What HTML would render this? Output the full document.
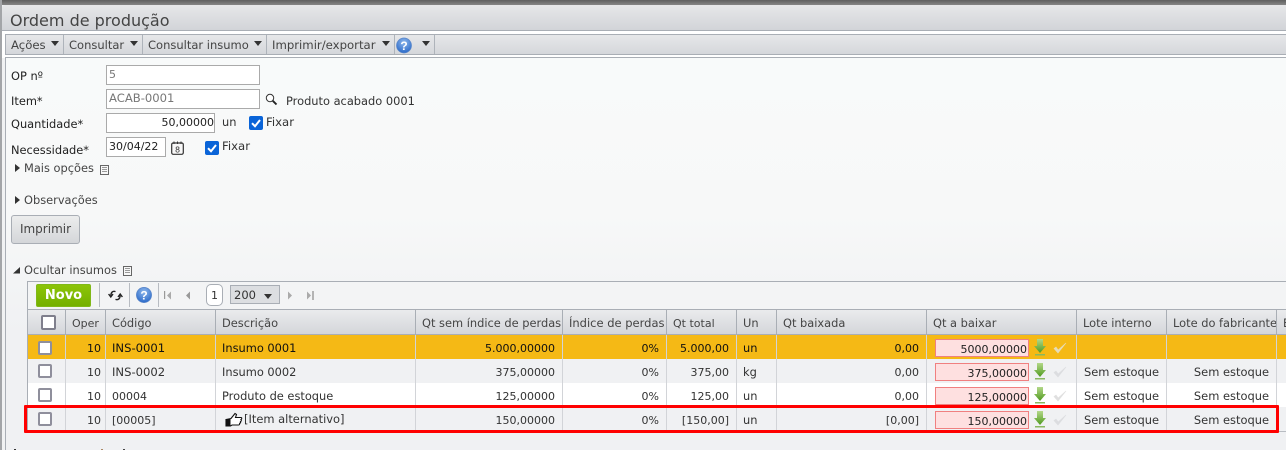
<!DOCTYPE html>
<html lang="pt"><head><meta charset="utf-8"><title>Ordem de produção</title>
<style>
html,body{margin:0;padding:0}
body{width:1286px;height:450px;overflow:hidden;position:relative;background:#f0f1f3;font:11.4px/14px "DejaVu Sans",sans-serif;color:#333}
.a{position:absolute;white-space:nowrap}
.box{position:absolute;box-sizing:border-box}
.lb{color:#222}
.inp{position:absolute;box-sizing:border-box;background:#fff;border:1px solid #aaa;height:20px;line-height:18px;padding:0 2px;font-size:11px;white-space:nowrap}
.ck{position:absolute;width:14px;height:14px;border-radius:2px;background:#0a64d8}
.ck svg{position:absolute;left:0;top:0}
.tri{position:absolute;width:0;height:0;border-left:4px solid transparent;border-right:4px solid transparent;border-top:5px solid #333}
.trr{position:absolute;width:0;height:0;border-top:4px solid transparent;border-bottom:4px solid transparent;border-left:5px solid #333}
.tb{position:absolute;top:36px;height:19px;line-height:19px;color:#444;white-space:nowrap;font-size:11.7px}
.sep{position:absolute;top:35px;width:1px;height:19px;background:#aeb3ba}
.vl{position:absolute;width:1px}
.hd{position:absolute;top:316px;color:#444;white-space:nowrap;line-height:14px}
.row{position:absolute;left:27px;width:1259px;height:24px}
.c{position:absolute;height:24px;line-height:27px;white-space:nowrap;color:#333}
.r{text-align:right;font-size:11px}
.n{font-size:11px}
.s{text-align:right;font-size:11.45px}
.cb{position:absolute;left:38px;width:14px;height:14px;box-sizing:border-box;background:#fff;border:2px solid #8f8f9c;border-radius:2px}
.q{position:absolute;left:935px;width:94px;height:18px;box-sizing:border-box;background:#fee0e0;border:1px solid #f08080;text-align:right;line-height:19px;padding-right:1px;color:#222;white-space:nowrap;font-size:11px}
</style></head><body>
<!-- top strip -->
<div class="box" style="left:0;top:0;width:1286px;height:5px;background:linear-gradient(#5f5f5f,#858585)"></div>
<div class="box" style="left:0;top:0;width:2px;height:450px;background:#a3a5a8"></div>
<div class="box" style="left:2px;top:5px;width:1284px;height:26px;background:linear-gradient(#e6e7e9,#d2d4d8);border-bottom:1px solid #a9aeb5;border-top-left-radius:3px"></div>
<div class="box" style="left:2px;top:31px;width:1284px;height:27px;background:#fff"></div>
<div class="box" style="left:5px;top:34px;width:1281px;height:21px;background:linear-gradient(#e6e7e9,#d5d7db);border-top:1px solid #a9aeb5;border-bottom:1px solid #a9aeb5;border-left:1px solid #a9aeb5"></div>
<div class="box" style="left:5px;top:57px;width:1281px;height:393px;background:linear-gradient(#f8fafa,#f7f8f8 40%,#f0f1f3 70%);border-top:1px solid #a9aeb5;border-left:1px solid #a9aeb5"></div>
<div class="box" style="left:2px;top:58px;width:3px;height:392px;background:#f1f2f3"></div>

<div class="a" style="left:10px;top:11px;font-size:16px;line-height:20px;color:#444">Ordem de produção</div>

<!-- toolbar -->
<div class="tb" style="left:11px">Ações</div><div class="tri" style="left:51px;top:41px"></div><div class="sep" style="left:63px"></div>
<div class="tb" style="left:69px;font-size:11.5px">Consultar</div><div class="tri" style="left:130px;top:41px"></div><div class="sep" style="left:142px"></div>
<div class="tb" style="left:148px;font-size:11.5px">Consultar insumo</div><div class="tri" style="left:254px;top:41px"></div><div class="sep" style="left:266px"></div>
<div class="tb" style="left:272px">Imprimir/exportar</div><div class="tri" style="left:382px;top:41px"></div><div class="sep" style="left:394px"></div>
<svg class="box" style="left:396px;top:37px" width="16" height="17" viewBox="0 0 16 17"><defs><radialGradient id="hb" cx=".5" cy=".3" r=".8"><stop offset="0" stop-color="#8fb8ec"/><stop offset="1" stop-color="#1d5fc4"/></radialGradient></defs><circle cx="8" cy="8.5" r="7.5" fill="url(#hb)" stroke="#5a86c8" stroke-width=".7"/><text x="8" y="13" text-anchor="middle" font-family="Liberation Sans" font-weight="bold" font-size="12" fill="#fff">?</text></svg>
<div class="tri" style="left:422px;top:41px"></div><div class="sep" style="left:434px"></div>

<!-- form -->
<div class="a lb" style="left:11px;top:69px">OP nº</div>
<div class="inp" style="left:106px;top:65px;width:154px;color:#777">5</div>
<div class="a lb" style="left:11px;top:94px">Item*</div>
<div class="inp" style="left:106px;top:89px;width:154px;color:#777;font-size:11.6px;line-height:16px">ACAB-0001</div>
<svg class="box" style="left:265px;top:93px" width="13" height="13" viewBox="0 0 13 13"><circle cx="5" cy="5" r="3.7" fill="#fff" stroke="#333" stroke-width="1"/><path d="M7.8 7.8L11.5 11.5" stroke="#222" stroke-width="1.9"/></svg>
<div class="a" style="left:286px;top:94px;color:#333">Produto acabado 0001</div>
<div class="a lb" style="left:11px;top:117px">Quantidade*</div>
<div class="inp" style="left:106px;top:113px;width:109px;text-align:right;padding-right:0;color:#222">50,00000</div>
<div class="a" style="left:222px;top:115px">un</div>
<div class="ck" style="left:249px;top:116px"><svg width="14" height="14"><path d="M3 7.2L6 10.2L11 4" fill="none" stroke="#fff" stroke-width="2"/></svg></div>
<div class="a" style="left:266px;top:115px;font-size:11.7px">Fixar</div>
<div class="a lb" style="left:11px;top:143px">Necessidade*</div>
<div class="inp" style="left:106px;top:137px;width:60px;color:#222">30/04/22</div>
<svg class="box" style="left:171px;top:141px" width="13" height="14" viewBox="0 0 13 14"><rect x=".7" y="2" width="11.6" height="11.3" rx="1.5" fill="#f8f8f8" stroke="#333" stroke-width="1.2"/><path d="M3 .5v2.5M6.5 .5v2.5M10 .5v2.5" stroke="#333"/><text x="6.5" y="11.5" text-anchor="middle" font-size="8" fill="#333" font-family="DejaVu Sans">8</text></svg>
<div class="ck" style="left:205px;top:141px"><svg width="14" height="14"><path d="M3 7.2L6 10.2L11 4" fill="none" stroke="#fff" stroke-width="2"/></svg></div>
<div class="a" style="left:222px;top:139px;font-size:11.7px">Fixar</div>

<div class="trr" style="left:15px;top:164px"></div>
<div class="a" style="left:24px;top:161px;color:#444">Mais opções</div>
<svg class="box" style="left:100px;top:165px" width="9" height="10"><rect x=".5" y=".5" width="8" height="9" fill="#f7f7f7" stroke="#666"/><path d="M2 2.5h5M2 4.5h5M2 6.5h5" stroke="#999"/></svg>
<div class="trr" style="left:15px;top:196px"></div>
<div class="a" style="left:24px;top:193px;color:#444">Observações</div>

<div class="box" style="left:11px;top:215px;width:69px;height:29px;border:1px solid #a9aeb5;border-radius:3px;background:linear-gradient(#eceded,#d4d6d9);text-align:center;line-height:27px;font-size:12px;color:#444">Imprimir</div>

<svg class="box" style="left:13px;top:267px" width="8" height="7"><path d="M0 6.5L7 6.5L7 0Z" fill="#333"/></svg>
<div class="a" style="left:24px;top:263px;color:#444">Ocultar insumos</div>
<svg class="box" style="left:123px;top:266px" width="9" height="10"><rect x=".5" y=".5" width="8" height="9" fill="#f7f7f7" stroke="#666"/><path d="M2 2.5h5M2 4.5h5M2 6.5h5" stroke="#999"/></svg>

<!-- grid toolbar -->
<div class="box" style="left:27px;top:281px;width:1259px;height:28px;background:#f3f4f5;border-top:1px solid #a9aeb5;border-left:1px solid #a9aeb5"></div>
<div class="box" style="left:36px;top:284px;width:55px;height:23px;border-radius:2px;background:linear-gradient(#8cc408,#74b000);border:1px solid #80b818;color:#fff;font:bold 13px/21px 'DejaVu Sans',sans-serif;text-align:center">Novo</div>
<div class="box" style="left:99px;top:283px;width:1px;height:24px;background:#b8bcc2"></div>
<svg class="box" style="left:108px;top:289px" width="15" height="13" viewBox="0 0 15 13"><path d="M7.5 2.6C4.6 1.6 3 3.5 2.8 6.5M0.6 5L2.8 8L5 5M7.5 10.4C10.4 11.4 12 9.5 12.2 6.5M10 8L12.2 5L14.4 8" fill="none" stroke="#222" stroke-width="1.4"/></svg>
<div class="box" style="left:129px;top:283px;width:1px;height:24px;background:#b8bcc2"></div>
<svg class="box" style="left:136px;top:287px" width="16" height="16" viewBox="0 0 16 16"><circle cx="8" cy="8" r="7.6" fill="url(#hb)" stroke="#5a86c8" stroke-width=".7"/><text x="8" y="12.5" text-anchor="middle" font-family="Liberation Sans" font-weight="bold" font-size="12" fill="#fff">?</text></svg>
<div class="box" style="left:158px;top:283px;width:1px;height:24px;background:#b8bcc2"></div>
<svg class="box" style="left:164px;top:291px" width="8" height="9"><path d="M.5 0v8" stroke="#999" stroke-width="1.4"/><path d="M7 0.5L3 4.5L7 8.5Z" fill="#aaa"/></svg>
<svg class="box" style="left:185px;top:291px" width="6" height="9"><path d="M5 0.5L1 4.5L5 8.5Z" fill="#999"/></svg>
<div class="box" style="left:206px;top:284px;width:17px;height:22px;background:#fff;border:1px solid #a9aeb5;border-radius:5px;text-align:center;line-height:21px;font-size:11px;color:#333">1</div>
<div class="box" style="left:230px;top:285px;width:50px;height:19px;background:#dcdee1;border:1px solid #a9aeb5;line-height:18px;padding-left:3px;font-size:11.5px;color:#333">200</div>
<div class="tri" style="left:264px;top:294px;border-left-width:4.5px;border-right-width:4.5px"></div>
<svg class="box" style="left:287px;top:291px" width="6" height="9"><path d="M1 0.5L5 4.5L1 8.5Z" fill="#aaa"/></svg>
<svg class="box" style="left:306px;top:291px" width="8" height="9"><path d="M1 0.5L5 4.5L1 8.5Z" fill="#aaa"/><path d="M7 0v9" stroke="#999" stroke-width="1.4"/></svg>

<!-- grid header -->
<div class="box" style="left:27px;top:309px;width:1259px;height:26px;background:linear-gradient(#eaebed,#d4d6da);border-top:1px solid #a9aeb5;border-left:1px solid #a9aeb5;border-bottom:1px solid #a9aeb5"></div>
<div class="box" style="left:41px;top:315px;width:15px;height:15px;background:#fff;border:2px solid #7f7f8c;border-radius:2px"></div>
<div class="hd" style="left:72px;top:317px;font-size:11px">Oper</div>
<div class="hd" style="left:112px">Código</div>
<div class="hd" style="left:222px">Descrição</div>
<div class="hd" style="left:422px">Qt sem índice de perdas</div>
<div class="hd" style="left:569px;width:96px;overflow:hidden;font-size:11.5px">Índice de perdas</div>
<div class="hd" style="left:673px;top:317px;font-size:11px">Qt total</div>
<div class="hd" style="left:743px">Un</div>
<div class="hd" style="left:783px">Qt baixada</div>
<div class="hd" style="left:933px">Qt a baixar</div>
<div class="hd" style="left:1083px;font-size:11.4px">Lote interno</div>
<div class="hd" style="left:1173px;width:103px;overflow:hidden">Lote do fabricante</div>
<div class="hd" style="left:1283px">E</div>

<!-- rows -->
<div class="row" style="top:335px;background:#f5b915"></div>
<div class="row" style="top:359px;background:#f0f1f3"></div>
<div class="row" style="top:383px;background:#fff"></div>
<div class="row" style="top:407px;background:#f0f1f3"></div>
<div class="box" style="left:27px;top:431px;width:1259px;height:1px;background:#b8bcc2"></div>

<!-- column lines -->
<div class="vl" style="left:27px;top:309px;height:122px;background:#a9aeb5"></div>
<div class="vl" style="left:65px;top:310px;height:25px;background:#a9aeb5"></div><div class="vl" style="left:105px;top:310px;height:25px;background:#a9aeb5"></div><div class="vl" style="left:215px;top:310px;height:25px;background:#a9aeb5"></div><div class="vl" style="left:415px;top:310px;height:25px;background:#a9aeb5"></div><div class="vl" style="left:562px;top:310px;height:25px;background:#a9aeb5"></div><div class="vl" style="left:666px;top:310px;height:25px;background:#a9aeb5"></div><div class="vl" style="left:736px;top:310px;height:25px;background:#a9aeb5"></div><div class="vl" style="left:776px;top:310px;height:25px;background:#a9aeb5"></div><div class="vl" style="left:926px;top:310px;height:25px;background:#a9aeb5"></div><div class="vl" style="left:1076px;top:310px;height:25px;background:#a9aeb5"></div><div class="vl" style="left:1166px;top:310px;height:25px;background:#a9aeb5"></div><div class="vl" style="left:1276px;top:310px;height:25px;background:#a9aeb5"></div>
<div class="vl" style="left:65px;top:335px;height:96px;background:#d2d4d8"></div><div class="vl" style="left:105px;top:335px;height:96px;background:#d2d4d8"></div><div class="vl" style="left:215px;top:335px;height:96px;background:#d2d4d8"></div><div class="vl" style="left:415px;top:335px;height:96px;background:#d2d4d8"></div><div class="vl" style="left:562px;top:335px;height:96px;background:#d2d4d8"></div><div class="vl" style="left:666px;top:335px;height:96px;background:#d2d4d8"></div><div class="vl" style="left:736px;top:335px;height:96px;background:#d2d4d8"></div><div class="vl" style="left:776px;top:335px;height:96px;background:#d2d4d8"></div><div class="vl" style="left:926px;top:335px;height:96px;background:#d2d4d8"></div><div class="vl" style="left:1076px;top:335px;height:96px;background:#d2d4d8"></div><div class="vl" style="left:1166px;top:335px;height:96px;background:#d2d4d8"></div><div class="vl" style="left:1276px;top:335px;height:96px;background:#d2d4d8"></div>

<!-- row 1 -->
<div class="cb" style="top:341px"></div>
<div class="c r" style="left:66px;width:35px;top:335px;color:#111">10</div>
<div class="c" style="left:112px;top:335px;color:#111;font-size:11.6px">INS-0001</div>
<div class="c" style="left:222px;top:335px;color:#111">Insumo 0001</div>
<div class="c r" style="left:416px;width:139px;top:335px;color:#111">5.000,00000</div>
<div class="c r" style="left:563px;width:96px;top:335px;color:#111">0%</div>
<div class="c r" style="left:667px;width:62px;top:335px;color:#111">5.000,00</div>
<div class="c" style="left:743px;top:335px;color:#111">un</div>
<div class="c r" style="left:777px;width:142px;top:335px;color:#111">0,00</div>
<div class="q" style="top:339px">5000,00000</div>

<!-- row 2 -->
<div class="cb" style="top:364px"></div>
<div class="c r" style="left:66px;width:35px;top:359px">10</div>
<div class="c" style="left:112px;top:359px;font-size:11.6px">INS-0002</div>
<div class="c" style="left:222px;top:359px">Insumo 0002</div>
<div class="c r" style="left:416px;width:139px;top:359px">375,00000</div>
<div class="c r" style="left:563px;width:96px;top:359px">0%</div>
<div class="c r" style="left:667px;width:62px;top:359px">375,00</div>
<div class="c" style="left:743px;top:359px">kg</div>
<div class="c r" style="left:777px;width:142px;top:359px">0,00</div>
<div class="q" style="top:363px">375,00000</div>
<div class="c" style="left:1084px;top:359px;font-size:11.45px">Sem estoque</div>
<div class="c s" style="left:1167px;width:102px;top:359px">Sem estoque</div>

<!-- row 3 -->
<div class="cb" style="top:388px"></div>
<div class="c r" style="left:66px;width:35px;top:383px">10</div>
<div class="c n" style="left:112px;top:383px">00004</div>
<div class="c" style="left:222px;top:383px">Produto de estoque</div>
<div class="c r" style="left:416px;width:139px;top:383px">125,00000</div>
<div class="c r" style="left:563px;width:96px;top:383px">0%</div>
<div class="c r" style="left:667px;width:62px;top:383px">125,00</div>
<div class="c" style="left:743px;top:383px">un</div>
<div class="c r" style="left:777px;width:142px;top:383px">0,00</div>
<div class="q" style="top:387px">125,00000</div>
<div class="c" style="left:1084px;top:383px;font-size:11.45px">Sem estoque</div>
<div class="c s" style="left:1167px;width:102px;top:383px">Sem estoque</div>

<!-- row 4 -->
<div class="cb" style="top:412px"></div>
<div class="c r" style="left:66px;width:35px;top:407px">10</div>
<div class="c n" style="left:112px;top:407px">[00005]</div>
<svg class="box" style="left:225px;top:412px" width="18" height="16" viewBox="0 0 18 16"><path d="M1 7.5L6 6.5L10 1.5L11.5 2.5L10.5 5.5L16 5.5C17 5.5 17 7 16 7.5C16.6 8 16.4 9.2 15.5 9.5C15.9 10.2 15.5 11.2 14.6 11.3C14.8 12.3 14.2 13 13.4 13L7 13L5.5 14L1 14Z" fill="#fff" stroke="#111" stroke-width="1.1"/><path d="M1 7.5L5.5 6.8L5.5 14L1 14Z" fill="#111"/></svg>
<div class="c" style="left:244px;top:406px;font-size:11.45px">[Item alternativo]</div>
<div class="c r" style="left:416px;width:139px;top:407px">150,00000</div>
<div class="c r" style="left:563px;width:96px;top:407px">0%</div>
<div class="c r" style="left:667px;width:62px;top:407px">[150,00]</div>
<div class="c" style="left:743px;top:407px">un</div>
<div class="c r" style="left:777px;width:142px;top:407px">[0,00]</div>
<div class="q" style="top:411px">150,00000</div>
<div class="c" style="left:1084px;top:407px;font-size:11.45px">Sem estoque</div>
<div class="c s" style="left:1167px;width:102px;top:407px">Sem estoque</div>

<!-- arrows and checks -->
<svg class="box" style="left:1033px;top:339px" width="14" height="17" viewBox="0 0 14 17"><defs><linearGradient id="g" x1="0" y1="0" x2="0" y2="1"><stop offset="0" stop-color="#b4d88a"/><stop offset="1" stop-color="#4f9a1e"/></linearGradient></defs><path d="M4 0H10V7H13L7 14L1 7H4Z" fill="url(#g)"/><rect x="2" y="15" width="10" height="1.5" fill="#8ab860"/></svg>
<svg class="box" style="left:1033px;top:363px" width="14" height="17" viewBox="0 0 14 17"><path d="M4 0H10V7H13L7 14L1 7H4Z" fill="url(#g)"/><rect x="2" y="15" width="10" height="1.5" fill="#8ab860"/></svg>
<svg class="box" style="left:1033px;top:387px" width="14" height="17" viewBox="0 0 14 17"><path d="M4 0H10V7H13L7 14L1 7H4Z" fill="url(#g)"/><rect x="2" y="15" width="10" height="1.5" fill="#8ab860"/></svg>
<svg class="box" style="left:1033px;top:411px" width="14" height="17" viewBox="0 0 14 17"><path d="M4 0H10V7H13L7 14L1 7H4Z" fill="url(#g)"/><rect x="2" y="15" width="10" height="1.5" fill="#8ab860"/></svg>
<svg class="box" style="left:1053px;top:341px" width="14" height="14" viewBox="0 0 14 14"><path d="M1 7.5L5 12L13 2L5.2 9L3 6Z" fill="#e6dcb8" stroke="#e6dcb8" stroke-width=".6"/></svg>
<svg class="box" style="left:1053px;top:365px" width="14" height="14" viewBox="0 0 14 14"><path d="M1 7.5L5 12L13 2L5.2 9L3 6Z" fill="#dcdde0" stroke="#dcdde0" stroke-width=".6"/></svg>
<svg class="box" style="left:1053px;top:389px" width="14" height="14" viewBox="0 0 14 14"><path d="M1 7.5L5 12L13 2L5.2 9L3 6Z" fill="#e0e0e0" stroke="#e0e0e0" stroke-width=".6"/></svg>
<svg class="box" style="left:1053px;top:413px" width="14" height="14" viewBox="0 0 14 14"><path d="M1 7.5L5 12L13 2L5.2 9L3 6Z" fill="#dcdde0" stroke="#dcdde0" stroke-width=".6"/></svg>

<!-- red highlight -->
<div class="box" style="left:24px;top:405px;width:1255px;height:28px;border:3px solid #f00;border-radius:1px"></div>

<!-- cropped bottom marks -->
<div class="box" style="left:14px;top:449px;width:2px;height:1px;background:#333"></div>
<div class="box" style="left:101px;top:449px;width:2px;height:1px;background:#a86"></div>
<div class="box" style="left:123px;top:449px;width:2px;height:1px;background:#444"></div>
</body></html>
